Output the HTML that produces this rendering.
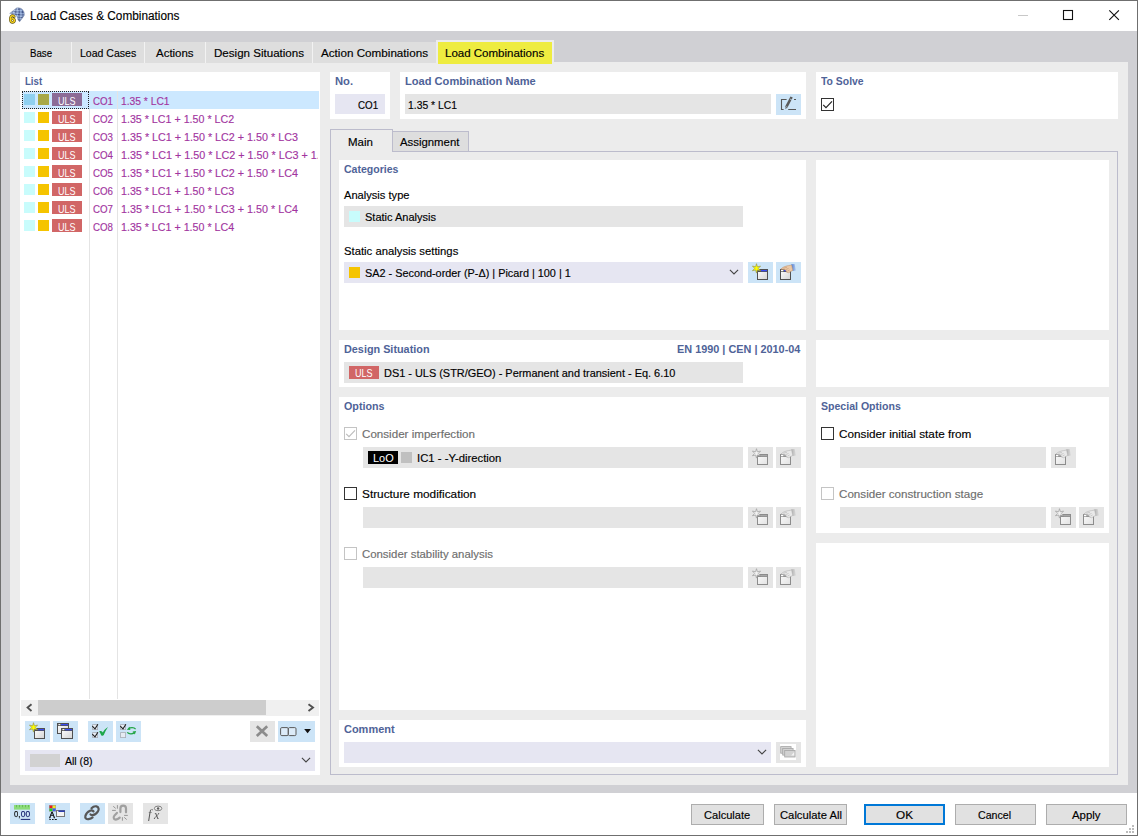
<!DOCTYPE html><html lang="en"><head><meta charset="utf-8"><title>Load Cases &amp; Combinations</title><style>
html,body{margin:0;padding:0;background:#fff;overflow:hidden}
#w{position:relative;width:1138px;height:836px;overflow:hidden;font:12px "Liberation Sans", sans-serif;color:#000}
#w div,#w svg,#w span{position:absolute;display:block}
#w svg{will-change:transform}
.t{line-height:16px;height:16px;white-space:pre;font-size:11px;transform-origin:0 0;-webkit-text-stroke:0.15px currentColor}
.hb{font-weight:bold;color:#4f6398;-webkit-text-stroke:0}
.dis{color:#6e6e6e}
.pu{color:#a2359f}
.wh{color:#fff;-webkit-text-stroke:0}
</style></head><body><div id="w"><div style="left:0px;top:0px;width:1138px;height:836px;background:#6f6f6f;"></div>
<div style="left:1px;top:1px;width:1136px;height:834px;background:#ffffff;"></div>
<div style="left:1px;top:31px;width:1136px;height:762px;background:#d0d0d4;"></div>
<div style="left:10px;top:62px;width:1118px;height:723px;background:#ececec;"></div>
<div style="left:10px;top:42px;width:426px;height:21px;background:#f2f2f2;"></div>
<div style="left:10px;top:42px;width:61px;height:21px;background:#dedede;"></div>
<div style="left:72px;top:42px;width:72px;height:21px;background:#dedede;"></div>
<div style="left:145px;top:42px;width:60px;height:21px;background:#dedede;"></div>
<div style="left:206px;top:42px;width:106px;height:21px;background:#dedede;"></div>
<div style="left:313px;top:42px;width:123px;height:21px;background:#dedede;"></div>
<div style="left:436px;top:40px;width:118px;height:24px;background:#ececec;"></div>
<div style="left:438px;top:42px;width:114px;height:22px;background:#eeec40;"></div>
<div style="left:20px;top:72px;width:300px;height:703px;background:#ffffff;"></div>
<div style="left:89px;top:91px;width:230px;height:18px;background:#cce8ff;"></div>
<div style="left:22px;top:91px;width:67px;height:18px;background:#cce8ff;"></div>
<div style="left:89px;top:109px;width:1px;height:590px;background:#e4e4e4;"></div>
<div style="left:117px;top:91px;width:1px;height:608px;background:#e4e4e4;"></div>
<div style="left:22px;top:91px;width:65px;height:16px;border:1px dotted #222;background:none"></div>
<div style="left:24px;top:94px;width:11px;height:11px;background:#8fd0f0;"></div>
<div style="left:38px;top:94px;width:11px;height:11px;background:#a8a846;"></div>
<div style="left:52px;top:93px;width:30px;height:13px;background:#8c6c96;"></div>
<div style="left:24px;top:112px;width:11px;height:11px;background:#c8fcfc;"></div>
<div style="left:38px;top:112px;width:11px;height:11px;background:#f5c400;"></div>
<div style="left:52px;top:111px;width:30px;height:13px;background:#d16666;"></div>
<div style="left:24px;top:130px;width:11px;height:11px;background:#c8fcfc;"></div>
<div style="left:38px;top:130px;width:11px;height:11px;background:#f5c400;"></div>
<div style="left:52px;top:129px;width:30px;height:13px;background:#d16666;"></div>
<div style="left:24px;top:148px;width:11px;height:11px;background:#c8fcfc;"></div>
<div style="left:38px;top:148px;width:11px;height:11px;background:#f5c400;"></div>
<div style="left:52px;top:147px;width:30px;height:13px;background:#d16666;"></div>
<div style="left:24px;top:166px;width:11px;height:11px;background:#c8fcfc;"></div>
<div style="left:38px;top:166px;width:11px;height:11px;background:#f5c400;"></div>
<div style="left:52px;top:165px;width:30px;height:13px;background:#d16666;"></div>
<div style="left:24px;top:184px;width:11px;height:11px;background:#c8fcfc;"></div>
<div style="left:38px;top:184px;width:11px;height:11px;background:#f5c400;"></div>
<div style="left:52px;top:183px;width:30px;height:13px;background:#d16666;"></div>
<div style="left:24px;top:202px;width:11px;height:11px;background:#c8fcfc;"></div>
<div style="left:38px;top:202px;width:11px;height:11px;background:#f5c400;"></div>
<div style="left:52px;top:201px;width:30px;height:13px;background:#d16666;"></div>
<div style="left:24px;top:220px;width:11px;height:11px;background:#c8fcfc;"></div>
<div style="left:38px;top:220px;width:11px;height:11px;background:#f5c400;"></div>
<div style="left:52px;top:219px;width:30px;height:13px;background:#d16666;"></div>
<div style="left:21px;top:700px;width:298px;height:16px;background:#f0f0f0;"></div>
<div style="left:38px;top:700px;width:228px;height:15px;background:#cdcdcd;"></div>
<svg style="left:21px;top:700px" width="17" height="16"><path d="M10.5 4.2 L6.6 7.6 L10.5 11" fill="none" stroke="#505050" stroke-width="1.9"/></svg>
<svg style="left:302px;top:700px" width="17" height="16"><path d="M6.5 4.2 L11 7.6 L6.5 11" fill="none" stroke="#505050" stroke-width="1.9"/></svg>
<svg style="left:0;top:0" width="0" height="0"><defs><linearGradient id="gw" x1="0" y1="0" x2="1" y2="1"><stop offset="0" stop-color="#fff"/><stop offset="1" stop-color="#d4d4d4"/></linearGradient><linearGradient id="gd" x1="0" y1="0" x2="1" y2="1"><stop offset="0" stop-color="#fafafa"/><stop offset="1" stop-color="#e2e2e2"/></linearGradient><linearGradient id="gs" x1="0" y1="0" x2="1" y2="0"><stop offset="0" stop-color="#4a78d0"/><stop offset="1" stop-color="#b8d0f0"/></linearGradient><linearGradient id="gsd" x1="0" y1="0" x2="1" y2="0"><stop offset="0" stop-color="#b0b0b0"/><stop offset="1" stop-color="#dcdcdc"/></linearGradient></defs></svg>
<svg style="left:25px;top:721px;background:#cce4f7" width="25" height="21" viewBox="0 0 25 21"><rect x="9.5" y="7.5" width="10" height="10" fill="url(#gw)" stroke="#505050"/><rect x="10" y="8" width="9" height="2" fill="#505050"/><rect x="13" y="8" width="6" height="1.3" fill="#3a4cf0"/><polygon points="8.50,1.70 9.40,4.84 12.57,4.05 10.30,6.40 12.57,8.75 9.40,7.96 8.50,11.10 7.60,7.96 4.43,8.75 6.70,6.40 4.43,4.05 7.60,4.84" fill="#ffff00" stroke="#9a9a50" stroke-width="0.7"/></svg>
<svg style="left:53px;top:721px;background:#cce4f7" width="25" height="21" viewBox="0 0 25 21"><rect x="4.5" y="2.5" width="11" height="10" fill="url(#gw)" stroke="#505050"/><rect x="5" y="3" width="10" height="2" fill="#505050"/><rect x="8" y="3" width="7" height="1.3" fill="#3a4cf0"/><rect x="5.4" y="3.1" width="2" height="1.1" fill="#fff"/><rect x="8.5" y="7.5" width="11" height="10" fill="url(#gw)" stroke="#505050"/><rect x="9" y="8" width="10" height="2" fill="#505050"/><rect x="12" y="8" width="7" height="1.3" fill="#3a4cf0"/><rect x="9.4" y="8.1" width="2" height="1.1" fill="#fff"/></svg>
<svg style="left:88px;top:721px;background:#cce4f7" width="25" height="21" viewBox="0 0 25 21"><rect x="4.6" y="3.6" width="5" height="5" fill="#e6ebf3" stroke="#a9adb6" stroke-width="0.8"/><path d="M4.3 5.1 L7 7.8 L9.9 3.3" fill="none" stroke="#1c1c1c" stroke-width="1.05"/><rect x="4.6" y="11.6" width="5" height="5" fill="#e6ebf3" stroke="#a9adb6" stroke-width="0.8"/><path d="M4.3 13.1 L7 15.8 L9.9 11.3" fill="none" stroke="#1c1c1c" stroke-width="1.05"/><path d="M11.2 10.6 C12.4 9.6 14 10.2 14.8 11.6 C15.8 9.6 17.6 7.4 20 6 C18.2 8.6 16.8 11.4 15.8 14 C15.2 15 13.8 15 13.2 14.2 C12.6 12.8 12 11.6 11.2 10.6 Z" fill="#1ea74a"/></svg>
<svg style="left:116px;top:721px;background:#cce4f7" width="25" height="21" viewBox="0 0 25 21"><rect x="4.6" y="3.6" width="5" height="5" fill="#e6ebf3" stroke="#a9adb6" stroke-width="0.8"/><path d="M4.3 5.1 L7 7.8 L9.9 3.3" fill="none" stroke="#1c1c1c" stroke-width="1.05"/><rect x="4.6" y="11.6" width="5" height="5" fill="#e6ebf3" stroke="#a9adb6" stroke-width="0.8"/><path d="M19.6 8.1 C18 6.2 14.6 6.2 12.6 7.6" fill="none" stroke="#22a544" stroke-width="1.3"/><path d="M10.8 8.7 L13.6 5.8 L14.4 9.1 Z" fill="#22a544"/><path d="M11.2 11.4 C13 13.2 16.4 13.2 18.2 11.9" fill="none" stroke="#22a544" stroke-width="1.3"/><path d="M20.1 10 L16.6 10.5 L18.8 13.4 Z" fill="#22a544"/></svg>
<svg style="left:250px;top:721px;background:#e5e5e5" width="25" height="21" viewBox="0 0 25 21"><path d="M6.8 5.2 L17.2 15 M17.2 5.2 L6.8 15" stroke="#8c8c8c" stroke-width="2.7" fill="none"/></svg>
<svg style="left:278px;top:721px;background:#cce4f7" width="37" height="21" viewBox="0 0 37 21"><rect x="2.6" y="6.6" width="7.6" height="8" rx="1.2" fill="#dcebf8" stroke="#5a5a5a"/><rect x="10.4" y="6.6" width="7.6" height="8" rx="1.2" fill="#dcebf8" stroke="#5a5a5a"/><path d="M26.2 8 L33 8 L29.6 12.2 Z" fill="#111"/></svg>
<div style="left:25px;top:750px;width:290px;height:21px;background:#e6e6f2;"></div>
<div style="left:30px;top:754px;width:30px;height:13px;background:#d2d2d2;"></div>
<svg style="left:300px;top:756px" width="12" height="8"><path d="M1.9 1.9 L6 6 L10.1 1.9" fill="none" stroke="#444" stroke-width="1.1"/></svg>
<div style="left:330px;top:72px;width:60px;height:47px;background:#fff;"></div>
<div style="left:335px;top:94px;width:50px;height:20px;background:#e6e6f2;"></div>
<div style="left:400px;top:72px;width:406px;height:47px;background:#fff;"></div>
<div style="left:405px;top:94px;width:366px;height:20px;background:#e5e5e5;"></div>
<svg style="left:776px;top:94px;background:#cce4f7" width="25" height="21" viewBox="0 0 25 21"><path d="M10.6 5.5 L5.5 5.5 L5.5 15.5 L7.6 15.5 M12.2 15.5 L20 15.5 M18 5.5 L20 5.5" fill="none" stroke="#555" stroke-width="1.1"/><path d="M15.6 3 L10 13.6" stroke="#5a5a5a" stroke-width="2.6" fill="none"/><path d="M10.4 12.6 L9 15.2 L11.6 13.6 Z" fill="#5a5a5a"/><path d="M14.0 5.0 L16.4 6.3" stroke="#cce4f7" stroke-width="0.7"/><path d="M9.6 12.3 L11.9 13.5" stroke="#cce4f7" stroke-width="0.6"/></svg>
<div style="left:816px;top:72px;width:302px;height:47px;background:#fff;"></div>
<svg style="left:821px;top:98px" width="13" height="13"><rect x="0.5" y="0.5" width="12" height="12" fill="#fff" stroke="#333"/><path d="M2.2 6.8 L5 9.6 L11 3.4" fill="none" stroke="#222" stroke-width="1.2"/></svg>
<div style="left:330px;top:151px;width:788px;height:1px;background:#bcbccc;"></div>
<div style="left:330px;top:129px;width:1px;height:646px;background:#bcbccc;"></div>
<div style="left:1117px;top:151px;width:1px;height:624px;background:#bcbccc;"></div>
<div style="left:330px;top:774px;width:788px;height:1px;background:#bcbccc;"></div>
<div style="left:330px;top:129px;width:63px;height:1px;background:#bcbccc;"></div>
<div style="left:392px;top:129px;width:1px;height:23px;background:#bcbccc;"></div>
<div style="left:331px;top:130px;width:61px;height:22px;background:#ececec;"></div>
<div style="left:393px;top:131px;width:76px;height:20px;background:#dedede;"></div>
<div style="left:393px;top:131px;width:76px;height:1px;background:#bcbccc;"></div>
<div style="left:468px;top:131px;width:1px;height:21px;background:#bcbccc;"></div>
<div style="left:339px;top:160px;width:467px;height:170px;background:#fff;"></div>
<div style="left:816px;top:160px;width:293px;height:170px;background:#fff;"></div>
<div style="left:344px;top:206px;width:399px;height:21px;background:#e5e5e5;"></div>
<div style="left:349px;top:211px;width:11px;height:11px;background:#c8fcfc;"></div>
<div style="left:344px;top:262px;width:399px;height:21px;background:#e6e6f2;"></div>
<div style="left:349px;top:267px;width:11px;height:11px;background:#f5c400;"></div>
<svg style="left:728px;top:268px" width="12" height="8"><path d="M1.9 1.9 L6 6 L10.1 1.9" fill="none" stroke="#444" stroke-width="1.1"/></svg>
<svg style="left:748px;top:262px;background:#cce4f7" width="25" height="21" viewBox="0 0 25 21"><rect x="9.5" y="7.5" width="10" height="10" fill="url(#gw)" stroke="#505050"/><rect x="10" y="8" width="9" height="2" fill="#505050"/><rect x="13" y="8" width="6" height="1.3" fill="#3a4cf0"/><polygon points="8.50,1.70 9.40,4.84 12.57,4.05 10.30,6.40 12.57,8.75 9.40,7.96 8.50,11.10 7.60,7.96 4.43,8.75 6.70,6.40 4.43,4.05 7.60,4.84" fill="#ffff00" stroke="#9a9a50" stroke-width="0.7"/></svg>
<svg style="left:776px;top:262px;background:#cce4f7" width="25" height="21" viewBox="0 0 25 21"><rect x="4.5" y="7.5" width="10" height="10" fill="url(#gw)" stroke="#505050"/><rect x="5" y="8" width="9" height="2" fill="#505050"/><rect x="8" y="8" width="6" height="1.3" fill="#3a4cf0"/><rect x="5" y="8" width="2.4" height="1.3" fill="#fff"/><path d="M15.2 2.2 L18.6 1.9 L20 8.6 L16.6 8.9 Z" fill="url(#gs)"/><path d="M4.8 7.2 C6.5 5.1 9.5 4.1 12.5 3.6 L15.6 3 L16.8 8.4 L14.6 9.6 L12.8 10.8 L10.6 10.2 L10 8.4 L8.2 7.4 Z" fill="#ecc9a6" stroke="#b98a66" stroke-width="0.5"/><path d="M7.5 6.3 L11 5.2 M9.6 7.6 L12.6 6.4 M11.4 9.2 L13.6 8" stroke="#b98a66" stroke-width="0.5" fill="none"/></svg>
<div style="left:339px;top:340px;width:467px;height:47px;background:#fff;"></div>
<div style="left:816px;top:340px;width:293px;height:47px;background:#fff;"></div>
<div style="left:344px;top:362px;width:399px;height:21px;background:#e5e5e5;"></div>
<div style="left:349px;top:366px;width:30px;height:13px;background:#d16666;"></div>
<div style="left:339px;top:397px;width:467px;height:313px;background:#fff;"></div>
<svg style="left:344px;top:427px" width="13" height="13"><rect x="0.5" y="0.5" width="12" height="12" fill="#fff" stroke="#c4c4c4"/><path d="M2.2 6.8 L5 9.6 L11 3.4" fill="none" stroke="#bdbdbd" stroke-width="1.2"/></svg>
<div style="left:363px;top:447px;width:380px;height:21px;background:#e5e5e5;"></div>
<div style="left:368px;top:451px;width:30px;height:13px;background:#000;"></div>
<div style="left:401px;top:452px;width:11px;height:11px;background:#c0c0c0;"></div>
<svg style="left:748px;top:447px;background:#e5e5e5" width="25" height="21" viewBox="0 0 25 21"><rect x="9.5" y="7.5" width="10" height="10" fill="url(#gd)" stroke="#8c8c8c"/><rect x="10" y="8" width="9" height="2" fill="#8c8c8c"/><rect x="13" y="8" width="6" height="1.3" fill="#a8a8a8"/><polygon points="8.50,1.70 9.40,4.84 12.57,4.05 10.30,6.40 12.57,8.75 9.40,7.96 8.50,11.10 7.60,7.96 4.43,8.75 6.70,6.40 4.43,4.05 7.60,4.84" fill="#f2f2f2" stroke="#a4a4a4" stroke-width="0.8"/></svg>
<svg style="left:776px;top:447px;background:#e5e5e5" width="25" height="21" viewBox="0 0 25 21"><rect x="4.5" y="7.5" width="10" height="10" fill="url(#gd)" stroke="#8c8c8c"/><rect x="5" y="8" width="9" height="2" fill="#8c8c8c"/><rect x="8" y="8" width="6" height="1.3" fill="#a8a8a8"/><rect x="5" y="8" width="2.4" height="1.3" fill="#fff"/><path d="M15.2 2.2 L18.6 1.9 L20 8.6 L16.6 8.9 Z" fill="url(#gsd)"/><path d="M4.8 7.2 C6.5 5.1 9.5 4.1 12.5 3.6 L15.6 3 L16.8 8.4 L14.6 9.6 L12.8 10.8 L10.6 10.2 L10 8.4 L8.2 7.4 Z" fill="#e9e9e9" stroke="#a9a9a9" stroke-width="0.5"/><path d="M7.5 6.3 L11 5.2 M9.6 7.6 L12.6 6.4 M11.4 9.2 L13.6 8" stroke="#a9a9a9" stroke-width="0.5" fill="none"/></svg>
<svg style="left:344px;top:487px" width="13" height="13"><rect x="0.5" y="0.5" width="12" height="12" fill="#fff" stroke="#333"/></svg>
<div style="left:363px;top:507px;width:380px;height:21px;background:#e5e5e5;"></div>
<svg style="left:748px;top:507px;background:#e5e5e5" width="25" height="21" viewBox="0 0 25 21"><rect x="9.5" y="7.5" width="10" height="10" fill="url(#gd)" stroke="#8c8c8c"/><rect x="10" y="8" width="9" height="2" fill="#8c8c8c"/><rect x="13" y="8" width="6" height="1.3" fill="#a8a8a8"/><polygon points="8.50,1.70 9.40,4.84 12.57,4.05 10.30,6.40 12.57,8.75 9.40,7.96 8.50,11.10 7.60,7.96 4.43,8.75 6.70,6.40 4.43,4.05 7.60,4.84" fill="#f2f2f2" stroke="#a4a4a4" stroke-width="0.8"/></svg>
<svg style="left:776px;top:507px;background:#e5e5e5" width="25" height="21" viewBox="0 0 25 21"><rect x="4.5" y="7.5" width="10" height="10" fill="url(#gd)" stroke="#8c8c8c"/><rect x="5" y="8" width="9" height="2" fill="#8c8c8c"/><rect x="8" y="8" width="6" height="1.3" fill="#a8a8a8"/><rect x="5" y="8" width="2.4" height="1.3" fill="#fff"/><path d="M15.2 2.2 L18.6 1.9 L20 8.6 L16.6 8.9 Z" fill="url(#gsd)"/><path d="M4.8 7.2 C6.5 5.1 9.5 4.1 12.5 3.6 L15.6 3 L16.8 8.4 L14.6 9.6 L12.8 10.8 L10.6 10.2 L10 8.4 L8.2 7.4 Z" fill="#e9e9e9" stroke="#a9a9a9" stroke-width="0.5"/><path d="M7.5 6.3 L11 5.2 M9.6 7.6 L12.6 6.4 M11.4 9.2 L13.6 8" stroke="#a9a9a9" stroke-width="0.5" fill="none"/></svg>
<svg style="left:344px;top:547px" width="13" height="13"><rect x="0.5" y="0.5" width="12" height="12" fill="#fff" stroke="#c4c4c4"/></svg>
<div style="left:363px;top:567px;width:380px;height:21px;background:#e5e5e5;"></div>
<svg style="left:748px;top:567px;background:#e5e5e5" width="25" height="21" viewBox="0 0 25 21"><rect x="9.5" y="7.5" width="10" height="10" fill="url(#gd)" stroke="#8c8c8c"/><rect x="10" y="8" width="9" height="2" fill="#8c8c8c"/><rect x="13" y="8" width="6" height="1.3" fill="#a8a8a8"/><polygon points="8.50,1.70 9.40,4.84 12.57,4.05 10.30,6.40 12.57,8.75 9.40,7.96 8.50,11.10 7.60,7.96 4.43,8.75 6.70,6.40 4.43,4.05 7.60,4.84" fill="#f2f2f2" stroke="#a4a4a4" stroke-width="0.8"/></svg>
<svg style="left:776px;top:567px;background:#e5e5e5" width="25" height="21" viewBox="0 0 25 21"><rect x="4.5" y="7.5" width="10" height="10" fill="url(#gd)" stroke="#8c8c8c"/><rect x="5" y="8" width="9" height="2" fill="#8c8c8c"/><rect x="8" y="8" width="6" height="1.3" fill="#a8a8a8"/><rect x="5" y="8" width="2.4" height="1.3" fill="#fff"/><path d="M15.2 2.2 L18.6 1.9 L20 8.6 L16.6 8.9 Z" fill="url(#gsd)"/><path d="M4.8 7.2 C6.5 5.1 9.5 4.1 12.5 3.6 L15.6 3 L16.8 8.4 L14.6 9.6 L12.8 10.8 L10.6 10.2 L10 8.4 L8.2 7.4 Z" fill="#e9e9e9" stroke="#a9a9a9" stroke-width="0.5"/><path d="M7.5 6.3 L11 5.2 M9.6 7.6 L12.6 6.4 M11.4 9.2 L13.6 8" stroke="#a9a9a9" stroke-width="0.5" fill="none"/></svg>
<div style="left:816px;top:397px;width:293px;height:136px;background:#fff;"></div>
<svg style="left:821px;top:427px" width="13" height="13"><rect x="0.5" y="0.5" width="12" height="12" fill="#fff" stroke="#333"/></svg>
<div style="left:840px;top:447px;width:206px;height:21px;background:#e5e5e5;"></div>
<svg style="left:1051px;top:447px;background:#e5e5e5" width="25" height="21" viewBox="0 0 25 21"><rect x="4.5" y="7.5" width="10" height="10" fill="url(#gd)" stroke="#8c8c8c"/><rect x="5" y="8" width="9" height="2" fill="#8c8c8c"/><rect x="8" y="8" width="6" height="1.3" fill="#a8a8a8"/><rect x="5" y="8" width="2.4" height="1.3" fill="#fff"/><path d="M15.2 2.2 L18.6 1.9 L20 8.6 L16.6 8.9 Z" fill="url(#gsd)"/><path d="M4.8 7.2 C6.5 5.1 9.5 4.1 12.5 3.6 L15.6 3 L16.8 8.4 L14.6 9.6 L12.8 10.8 L10.6 10.2 L10 8.4 L8.2 7.4 Z" fill="#e9e9e9" stroke="#a9a9a9" stroke-width="0.5"/><path d="M7.5 6.3 L11 5.2 M9.6 7.6 L12.6 6.4 M11.4 9.2 L13.6 8" stroke="#a9a9a9" stroke-width="0.5" fill="none"/></svg>
<svg style="left:821px;top:487px" width="13" height="13"><rect x="0.5" y="0.5" width="12" height="12" fill="#fff" stroke="#c4c4c4"/></svg>
<div style="left:840px;top:507px;width:206px;height:21px;background:#e5e5e5;"></div>
<svg style="left:1051px;top:507px;background:#e5e5e5" width="25" height="21" viewBox="0 0 25 21"><rect x="9.5" y="7.5" width="10" height="10" fill="url(#gd)" stroke="#8c8c8c"/><rect x="10" y="8" width="9" height="2" fill="#8c8c8c"/><rect x="13" y="8" width="6" height="1.3" fill="#a8a8a8"/><polygon points="8.50,1.70 9.40,4.84 12.57,4.05 10.30,6.40 12.57,8.75 9.40,7.96 8.50,11.10 7.60,7.96 4.43,8.75 6.70,6.40 4.43,4.05 7.60,4.84" fill="#f2f2f2" stroke="#a4a4a4" stroke-width="0.8"/></svg>
<svg style="left:1079px;top:507px;background:#e5e5e5" width="25" height="21" viewBox="0 0 25 21"><rect x="4.5" y="7.5" width="10" height="10" fill="url(#gd)" stroke="#8c8c8c"/><rect x="5" y="8" width="9" height="2" fill="#8c8c8c"/><rect x="8" y="8" width="6" height="1.3" fill="#a8a8a8"/><rect x="5" y="8" width="2.4" height="1.3" fill="#fff"/><path d="M15.2 2.2 L18.6 1.9 L20 8.6 L16.6 8.9 Z" fill="url(#gsd)"/><path d="M4.8 7.2 C6.5 5.1 9.5 4.1 12.5 3.6 L15.6 3 L16.8 8.4 L14.6 9.6 L12.8 10.8 L10.6 10.2 L10 8.4 L8.2 7.4 Z" fill="#e9e9e9" stroke="#a9a9a9" stroke-width="0.5"/><path d="M7.5 6.3 L11 5.2 M9.6 7.6 L12.6 6.4 M11.4 9.2 L13.6 8" stroke="#a9a9a9" stroke-width="0.5" fill="none"/></svg>
<div style="left:816px;top:543px;width:293px;height:224px;background:#fff;"></div>
<div style="left:339px;top:720px;width:467px;height:47px;background:#fff;"></div>
<div style="left:344px;top:742px;width:427px;height:21px;background:#e6e6f2;"></div>
<svg style="left:756px;top:748px" width="12" height="8"><path d="M1.9 1.9 L6 6 L10.1 1.9" fill="none" stroke="#444" stroke-width="1.1"/></svg>
<svg style="left:776px;top:742px;background:#e5e5e5" width="25" height="21" viewBox="0 0 25 21"><rect x="4" y="2" width="16" height="16" fill="#fff"/><rect x="4.7" y="4.6000000000000005" width="10.4" height="6.6" fill="#d2d2d2" stroke="#a6a6a6" stroke-width="0.8"/><rect x="6.7" y="6.5" width="10.4" height="6.6" fill="#d2d2d2" stroke="#a6a6a6" stroke-width="0.8"/><rect x="8.700000000000001" y="8.4" width="10.4" height="6.6" fill="#d2d2d2" stroke="#a6a6a6" stroke-width="0.8"/><path d="M15.2 13.4 L18.2 10 L18.2 13.4 Z" fill="#f4f4f4"/></svg>
<svg style="left:10px;top:803px;background:#cce4f7" width="25" height="21" viewBox="0 0 25 21"><rect x="4" y="2" width="16" height="4.6" fill="#8cdc7a"/><path d="M6.5 2 v2.2 M9.5 2 v2.2 M12.5 2 v2.2 M15.5 2 v2.2 M18.5 2 v2.2" stroke="#62b452" stroke-width="0.8"/><text x="3.9" y="14.4" font-family="Liberation Sans, sans-serif" font-size="9.4" fill="#111" stroke="#111" stroke-width="0.25" textLength="6.4" lengthAdjust="spacingAndGlyphs">0,</text><text x="10.8" y="14.4" font-family="Liberation Sans, sans-serif" font-size="9.4" fill="#1a2470" stroke="#1a2470" stroke-width="0.25" textLength="9.4" lengthAdjust="spacingAndGlyphs">00</text><rect x="10.8" y="15.9" width="9.4" height="1" fill="#1a2470"/></svg>
<svg style="left:45px;top:803px;background:#cce4f7" width="25" height="21" viewBox="0 0 25 21"><rect x="4" y="2" width="7" height="6.6" fill="#9a9a9a"/><rect x="4.6" y="2.6" width="2.7" height="2.5" fill="#f01818"/><rect x="7.8" y="2.6" width="2.7" height="2.5" fill="#f4e81c"/><rect x="4.6" y="5.6" width="2.7" height="2.5" fill="#1ed21e"/><rect x="7.8" y="5.6" width="2.7" height="2.5" fill="#3a5cf0"/><text x="4.3" y="15.1" font-family="Liberation Sans, sans-serif" font-size="8.8" fill="#000" stroke="#000" stroke-width="0.4" textLength="5.6" lengthAdjust="spacingAndGlyphs">A</text><path d="M4.4 16.5 h1.4 M7 16.5 h1.6 M9.8 16.5 h2" stroke="#111" stroke-width="1.2"/><rect x="11.5" y="7.5" width="8" height="6" fill="#f4f4f4" stroke="#777"/><rect x="13.4" y="7.4" width="6.4" height="1.6" fill="#2a3cb0"/></svg>
<svg style="left:80px;top:803px;background:#cce4f7" width="25" height="21" viewBox="0 0 25 21"><g fill="none" stroke="#575757" stroke-width="2.2" stroke-linecap="round"><path d="M11.5 5.3 C13 3.7 15 3 16.5 3.4 C18.7 4 19.4 6.4 17.8 8.7 C16.4 10.7 14.2 12.2 12.4 12.2 C11.5 12.2 10.9 11.9 10.5 11.4"/><path d="M13.5 8.4 C12.5 7.4 11.3 7.2 10 7.8 C8 8.7 6 10.7 5.4 12.9 C4.8 15.1 6.4 16.6 8.6 16.2 C10.2 15.9 11.7 15.2 12.6 14.4"/></g></svg>
<svg style="left:108px;top:803px;background:#e5e5e5" width="25" height="21" viewBox="0 0 25 21"><g fill="none" stroke="#a0a0a0" stroke-width="2.2" stroke-linecap="round"><path d="M12.4 9.1 V5.4 a2.8 2.8 0 0 1 5.6 0 V9.3"/><path d="M8.9 9.9 L6.4 12.6 C4.6 14.8 6.2 17 8.6 16.4 C9.9 16.1 10.9 15.4 11.7 14.6"/></g><g stroke="#969696" stroke-width="1" fill="none"><path d="M5.2 3.3 L7.7 5.4 M9.4 2.1 V5.7 M4.1 7.4 H7.8"/><path d="M16.1 12.4 H19.8 M14.4 14.2 V17.7 M16.2 14.3 L18.7 16.6"/></g></svg>
<svg style="left:143px;top:803px;background:#e5e5e5" width="25" height="21" viewBox="0 0 25 21"><text x="4.9" y="14.8" font-family="Liberation Serif, serif" font-style="italic" font-size="12.4" fill="#555">f</text><text x="10.9" y="15.5" font-family="Liberation Serif, serif" font-style="italic" font-size="12" fill="#555">x</text><ellipse cx="15.1" cy="5.4" rx="3.7" ry="2.3" fill="#f2f2f2" stroke="#707070" stroke-width="0.9"/><circle cx="15.1" cy="5.4" r="1.25" fill="#5a5a5a"/></svg>
<div style="left:691px;top:804px;width:71px;height:19px;background:#e1e1e1;border:1px solid #adadad"></div>
<div style="left:774px;top:804px;width:71px;height:19px;background:#e1e1e1;border:1px solid #adadad"></div>
<div style="left:864px;top:804px;width:77px;height:17px;background:#e1e1e1;border:2px solid #0078d7"></div>
<div style="left:955px;top:804px;width:79px;height:19px;background:#e1e1e1;border:1px solid #adadad"></div>
<div style="left:1046px;top:804px;width:79px;height:19px;background:#e1e1e1;border:1px solid #adadad"></div>
<svg style="left:1126px;top:825px" width="8" height="8"><rect x="6" y="0" width="2" height="2" fill="#bcbcbc"/><rect x="3" y="3" width="2" height="2" fill="#bcbcbc"/><rect x="6" y="3" width="2" height="2" fill="#bcbcbc"/><rect x="0" y="6" width="2" height="2" fill="#bcbcbc"/><rect x="3" y="6" width="2" height="2" fill="#bcbcbc"/><rect x="6" y="6" width="2" height="2" fill="#bcbcbc"/></svg>
<svg style="left:1010px;top:4px" width="124" height="24"><path d="M8 11.5 H18" stroke="#c8c8c8" stroke-width="1"/><rect x="53.5" y="6.5" width="9" height="9" fill="none" stroke="#111" stroke-width="1.1"/><path d="M99.3 6.3 L108.9 15.9 M108.9 6.3 L99.3 15.9" stroke="#111" stroke-width="1.15" fill="none"/></svg>
<svg style="left:6px;top:5px" width="22" height="20" viewBox="6 5 22 20"><defs><pattern id="ck" width="4.4" height="4.4" patternUnits="userSpaceOnUse" patternTransform="rotate(-36) skewX(14)"><rect width="4.4" height="4.4" fill="#a4bee6"/><rect width="2.2" height="2.2" fill="#3c4f86"/><rect x="2.2" y="2.2" width="2.2" height="2.2" fill="#4d6298"/></pattern><linearGradient id="vg" x1="0" y1="0" x2="1" y2="1"><stop offset="0" stop-color="#fff" stop-opacity="0.35"/><stop offset="0.55" stop-color="#fff" stop-opacity="0"/><stop offset="1" stop-color="#101a40" stop-opacity="0.45"/></linearGradient></defs><path id="vault" d="M9.7 13.4 L16.6 8 C19 7.4 21.4 8.2 22.8 10 C24.2 11.8 24.6 13.8 24.2 15.6 L19.6 21.8 L17.8 19.4 C17.6 17.6 17 16.2 15.8 15.2 C14.4 14 12.2 13.4 9.7 13.4 Z" fill="url(#ck)"/><path d="M9.7 13.4 L16.6 8 C19 7.4 21.4 8.2 22.8 10 C24.2 11.8 24.6 13.8 24.2 15.6 L19.6 21.8 L17.8 19.4 C17.6 17.6 17 16.2 15.8 15.2 C14.4 14 12.2 13.4 9.7 13.4 Z" fill="url(#vg)" stroke="#56688f" stroke-width="0.4"/><text x="9.3" y="22.5" font-family="Liberation Sans, sans-serif" font-weight="bold" font-size="11.4" fill="#f8d21c" stroke="#5c5216" stroke-width="1.3" stroke-linejoin="round" paint-order="stroke">6</text></svg>
<span class="t " style="font-size:12px;left:30.1px;top:7.9px;transform:scaleX(0.9823)">Load Cases &amp; Combinations</span>
<span class="t " style="left:30.2px;top:44.9px;transform:scaleX(0.8812)">Base</span>
<span class="t " style="left:80.1px;top:44.9px;transform:scaleX(0.9571)">Load Cases</span>
<span class="t " style="left:156.0px;top:44.9px;transform:scaleX(1.0422)">Actions</span>
<span class="t " style="left:214.2px;top:44.9px;transform:scaleX(1.0513)">Design Situations</span>
<span class="t " style="left:320.8px;top:44.9px;transform:scaleX(1.0606)">Action Combinations</span>
<span class="t " style="left:445.1px;top:44.9px;transform:scaleX(1.0464)">Load Combinations</span>
<span class="t hb" style="left:25.4px;top:72.9px;transform:scaleX(0.8741)">List</span>
<span class="t hb" style="left:335.3px;top:72.9px;transform:scaleX(1.0206)">No.</span>
<span class="t " style="left:358.4px;top:96.9px;transform:scaleX(0.8884)">CO1</span>
<span class="t hb" style="left:405.2px;top:72.9px;transform:scaleX(1.0088)">Load Combination Name</span>
<span class="t " style="left:408.1px;top:96.9px;transform:scaleX(0.9407)">1.35 * LC1</span>
<span class="t hb" style="left:820.8px;top:72.9px;transform:scaleX(0.9460)">To Solve</span>
<span class="t " style="left:348.3px;top:133.9px;transform:scaleX(1.0443)">Main</span>
<span class="t " style="left:400.0px;top:133.9px;transform:scaleX(1.0333)">Assignment</span>
<span class="t hb" style="left:344.2px;top:160.9px;transform:scaleX(0.9567)">Categories</span>
<span class="t " style="left:344.0px;top:186.9px;transform:scaleX(1.0106)">Analysis type</span>
<span class="t " style="left:365.2px;top:208.9px;transform:scaleX(1.0011)">Static Analysis</span>
<span class="t " style="left:344.0px;top:242.9px;transform:scaleX(1.0271)">Static analysis settings</span>
<span class="t " style="left:365.2px;top:264.9px;transform:scaleX(0.9870)">SA2 - Second-order (P-Δ) | Picard | 100 | 1</span>
<span class="t hb" style="left:344.0px;top:340.9px;transform:scaleX(0.9852)">Design Situation</span>
<span class="t hb" style="left:677.3px;top:340.9px;transform:scaleX(0.9889)">EN 1990 | CEN | 2010-04</span>
<span class="t " style="left:384.3px;top:364.9px;transform:scaleX(0.9927)">DS1 - ULS (STR/GEO) - Permanent and transient - Eq. 6.10</span>
<span class="t hb" style="left:344.0px;top:397.9px;transform:scaleX(0.9744)">Options</span>
<span class="t dis" style="left:362.4px;top:425.9px;transform:scaleX(1.0551)">Consider imperfection</span>
<span class="t " style="left:416.7px;top:449.9px;transform:scaleX(1.0277)">IC1 - -Y-direction</span>
<span class="t " style="left:362.4px;top:485.9px;transform:scaleX(1.0734)">Structure modification</span>
<span class="t dis" style="left:362.4px;top:545.9px;transform:scaleX(1.0343)">Consider stability analysis</span>
<span class="t hb" style="left:820.7px;top:397.9px;transform:scaleX(0.9598)">Special Options</span>
<span class="t " style="left:839.2px;top:425.9px;transform:scaleX(1.0668)">Consider initial state from</span>
<span class="t dis" style="left:839.2px;top:485.9px;transform:scaleX(1.0568)">Consider construction stage</span>
<span class="t hb" style="left:344.0px;top:720.9px;transform:scaleX(0.9974)">Comment</span>
<span class="t " style="left:64.7px;top:752.9px;transform:scaleX(0.9570)">All (8)</span>
<span class="t " style="left:704.2px;top:806.9px;transform:scaleX(1.0074)">Calculate</span>
<span class="t " style="left:779.5px;top:806.9px;transform:scaleX(1.0223)">Calculate All</span>
<span class="t " style="left:895.7px;top:806.9px;transform:scaleX(1.0688)">OK</span>
<span class="t " style="left:978.4px;top:806.9px;transform:scaleX(0.9664)">Cancel</span>
<span class="t " style="left:1072.0px;top:806.9px;transform:scaleX(1.0352)">Apply</span>
<span class="t wh" style="left:58.4px;top:92.9px;transform:scaleX(0.8222)">ULS</span>
<span class="t wh" style="left:58.4px;top:110.9px;transform:scaleX(0.8222)">ULS</span>
<span class="t wh" style="left:58.4px;top:128.9px;transform:scaleX(0.8222)">ULS</span>
<span class="t wh" style="left:58.4px;top:146.9px;transform:scaleX(0.8222)">ULS</span>
<span class="t wh" style="left:58.4px;top:164.9px;transform:scaleX(0.8222)">ULS</span>
<span class="t wh" style="left:58.4px;top:182.9px;transform:scaleX(0.8222)">ULS</span>
<span class="t wh" style="left:58.4px;top:200.9px;transform:scaleX(0.8222)">ULS</span>
<span class="t wh" style="left:58.4px;top:218.9px;transform:scaleX(0.8222)">ULS</span>
<span class="t wh" style="left:355.3px;top:364.9px;transform:scaleX(0.8222)">ULS</span>
<span class="t wh" style="left:372.9px;top:449.9px;transform:scaleX(0.9953)">LoO</span>
<div style="left:20px;top:72px;width:298px;height:628px;overflow:hidden;background:none"><span class="t pu" style="left:73.3px;top:20.9px;transform:scaleX(0.8840)">CO1</span><span class="t pu" style="left:101.2px;top:20.9px;transform:scaleX(0.9330)">1.35 * LC1</span><span class="t pu" style="left:73.3px;top:38.9px;transform:scaleX(0.8840)">CO2</span><span class="t pu" style="left:101.2px;top:38.9px;transform:scaleX(0.9708)">1.35 * LC1 + 1.50 * LC2</span><span class="t pu" style="left:73.3px;top:56.9px;transform:scaleX(0.8840)">CO3</span><span class="t pu" style="left:101.2px;top:56.9px;transform:scaleX(0.9772)">1.35 * LC1 + 1.50 * LC2 + 1.50 * LC3</span><span class="t pu" style="left:73.3px;top:74.9px;transform:scaleX(0.8840)">CO4</span><span class="t pu" style="left:101.2px;top:74.9px;transform:scaleX(0.9803)">1.35 * LC1 + 1.50 * LC2 + 1.50 * LC3 + 1.50 * LC4</span><span class="t pu" style="left:73.3px;top:92.9px;transform:scaleX(0.8840)">CO5</span><span class="t pu" style="left:101.2px;top:92.9px;transform:scaleX(0.9772)">1.35 * LC1 + 1.50 * LC2 + 1.50 * LC4</span><span class="t pu" style="left:73.3px;top:110.9px;transform:scaleX(0.8840)">CO6</span><span class="t pu" style="left:101.2px;top:110.9px;transform:scaleX(0.9708)">1.35 * LC1 + 1.50 * LC3</span><span class="t pu" style="left:73.3px;top:128.9px;transform:scaleX(0.8840)">CO7</span><span class="t pu" style="left:101.2px;top:128.9px;transform:scaleX(0.9772)">1.35 * LC1 + 1.50 * LC3 + 1.50 * LC4</span><span class="t pu" style="left:73.3px;top:146.9px;transform:scaleX(0.8840)">CO8</span><span class="t pu" style="left:101.2px;top:146.9px;transform:scaleX(0.9708)">1.35 * LC1 + 1.50 * LC4</span></div></div></body></html>
